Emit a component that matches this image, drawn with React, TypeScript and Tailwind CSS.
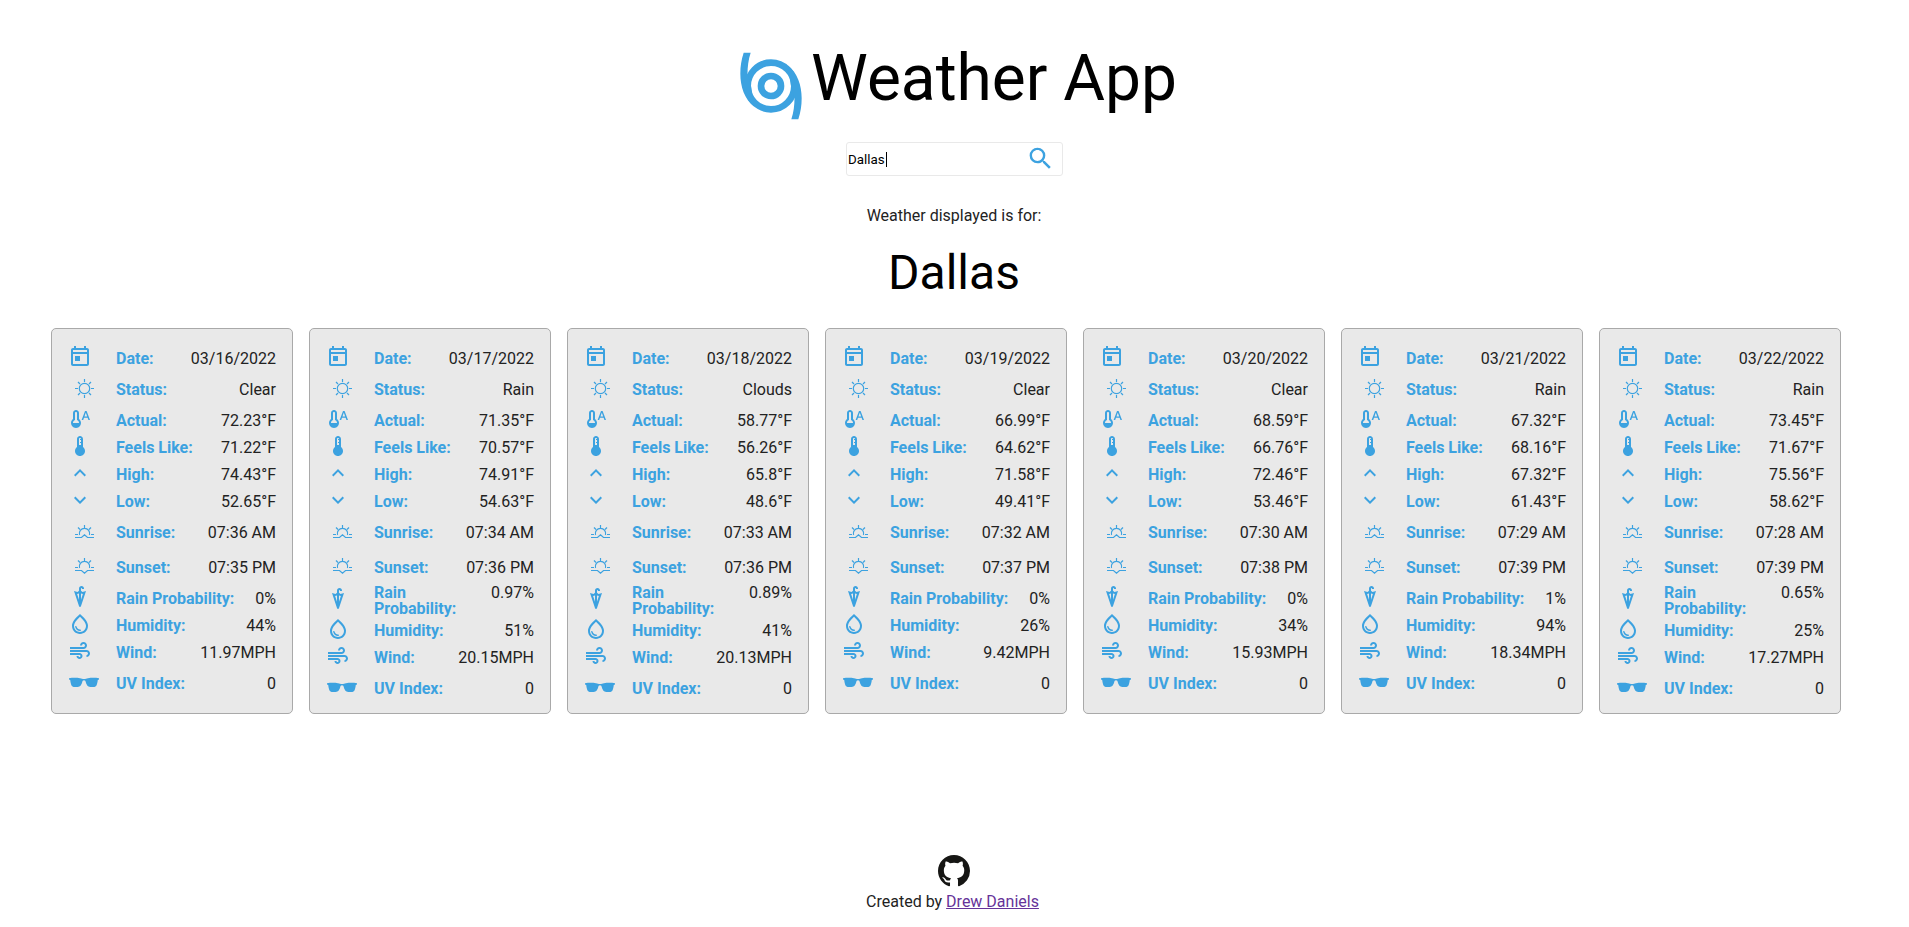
import type { ReactNode } from "react";
import {
  MdDeviceThermostat,
  MdExpandLess,
  MdExpandMore,
  MdOutlineAir,
  MdOutlineUmbrella,
  MdOutlineWaterDrop,
  MdSearch,
  MdThermostatAuto,
} from "react-icons/md";

interface Day {
  date: string;
  status: string;
  actual: string;
  feels: string;
  high: string;
  low: string;
  sunrise: string;
  sunset: string;
  rain: string;
  humidity: string;
  wind: string;
}

const days: Day[] = [
  { date: "03/16/2022", status: "Clear", actual: "72.23", feels: "71.22", high: "74.43", low: "52.65", sunrise: "07:36 AM", sunset: "07:35 PM", rain: "0", humidity: "44", wind: "11.97" },
  { date: "03/17/2022", status: "Rain", actual: "71.35", feels: "70.57", high: "74.91", low: "54.63", sunrise: "07:34 AM", sunset: "07:36 PM", rain: "0.97", humidity: "51", wind: "20.15" },
  { date: "03/18/2022", status: "Clouds", actual: "58.77", feels: "56.26", high: "65.8", low: "48.6", sunrise: "07:33 AM", sunset: "07:36 PM", rain: "0.89", humidity: "41", wind: "20.13" },
  { date: "03/19/2022", status: "Clear", actual: "66.99", feels: "64.62", high: "71.58", low: "49.41", sunrise: "07:32 AM", sunset: "07:37 PM", rain: "0", humidity: "26", wind: "9.42" },
  { date: "03/20/2022", status: "Clear", actual: "68.59", feels: "66.76", high: "72.46", low: "53.46", sunrise: "07:30 AM", sunset: "07:38 PM", rain: "0", humidity: "34", wind: "15.93" },
  { date: "03/21/2022", status: "Rain", actual: "67.32", feels: "68.16", high: "67.32", low: "61.43", sunrise: "07:29 AM", sunset: "07:39 PM", rain: "1", humidity: "94", wind: "18.34" },
  { date: "03/22/2022", status: "Rain", actual: "73.45", feels: "71.67", high: "75.56", low: "58.62", sunrise: "07:28 AM", sunset: "07:39 PM", rain: "0.65", humidity: "25", wind: "17.27" },
];

function Hurricane() {
  const arm =
    "M3.8 2H5.9C5.2 4.1 4.95 6.3 4.95 8.3L6 12L7 18.2C4 16 2.8 12 2.8 8.3C2.8 6.1 3.1 4.1 3.8 2z";
  return (
    <svg viewBox="0 0 24 24" className="mt-[14px] -ml-px size-20 shrink-0 text-[#3ca2e0]">
      <g fill="none" stroke="currentColor" strokeWidth="2">
        <circle cx="12" cy="12" r="7" />
        <circle cx="12" cy="12" r="3" />
      </g>
      <path d={arm} fill="currentColor" />
      <path d={arm} fill="currentColor" transform="rotate(180 12 12)" />
    </svg>
  );
}

function Today() {
  return (
    <svg viewBox="0 0 24 24" fill="currentColor" className="size-6">
      <path d="M19 3h-1V1h-2v2H8V1H6v2H5c-1.11 0-1.99.9-1.99 2L3 19c0 1.1.89 2 2 2h14c1.1 0 2-.9 2-2V5c0-1.1-.9-2-2-2zm0 16H5V9h14v10zm0-12H5V5h14v2zM7 11h5v5H7z" />
    </svg>
  );
}

function Sun() {
  return (
    <svg viewBox="0 0 30 30" fill="none" stroke="currentColor" strokeWidth="1.2" className="size-[30px]">
      <circle cx="15.5" cy="14.5" r="5.2" />
      <path d="M15.5 5v3M15.5 21v3M6 14.5h3M22 14.5h3M9 8l2 2M20 19l2 2M9 21l2-2M20 10l2-2" />
    </svg>
  );
}

function Sunrise() {
  return (
    <svg viewBox="0 0 30 30" fill="none" stroke="currentColor" strokeWidth="1.2" className="size-[30px]">
      <path d="M10.5 18a5.2 5.2 0 1 1 10 0M15.5 8v3M9 10.5l2 2M22 10.5l-2 2M6 17.5h3M22 17.5h3M6 20.5h6.5l3-2.7l3 2.7h6.5" />
    </svg>
  );
}

function Sunset() {
  return (
    <svg viewBox="0 0 30 30" fill="none" stroke="currentColor" strokeWidth="1.2" className="size-[30px]">
      <path d="M10.5 16a5.2 5.2 0 1 1 10 0M15.5 6v3M9 8.5l2 2M22 8.5l-2 2M6 15.5h3M22 15.5h3M6 18.5h6.5l3 2.7l3-2.7h6.5" />
    </svg>
  );
}

function Sunglasses() {
  return (
    <svg viewBox="0 0 30 30" fill="currentColor" className="size-[30px]">
      <path d="M0 10.2c4-.6 8-.5 11 0 1.500.3 2.500.7 4 .7s2.500-.4 4-.7c3-.5 7-.6 11 0v1.200l-1.200.6c-.4 2.700-.8 4.900-1.700 5.900-.8.9-2 1.100-4.600 1.100-3.300 0-4.600-1.300-5.600-4.600-.4-1.300-.7-2.200-1.900-2.200s-1.500.9-1.900 2.200c-1 3.300-2.300 4.600-5.600 4.600-2.600 0-3.800-.2-4.600-1.100-.9-1-1.300-3.200-1.700-5.900L0 11.400z" />
    </svg>
  );
}

function GitHubMark() {
  return (
    <svg viewBox="0 0 16 16" fill="currentColor" className="ml-px size-8 text-[#161614]">
      <path d="M8 0C3.58 0 0 3.58 0 8c0 3.54 2.29 6.53 5.47 7.59.4.07.55-.17.55-.38 0-.19-.01-.82-.01-1.49-2.01.37-2.53-.49-2.69-.94-.09-.23-.48-.94-.82-1.13-.28-.15-.68-.52-.01-.53.63-.01 1.08.58 1.23.82.72 1.21 1.87.87 2.33.66.07-.52.28-.87.51-1.07-1.78-.2-3.64-.89-3.64-3.95 0-.87.31-1.59.82-2.15-.08-.2-.36-1.02.08-2.12 0 0 .67-.21 2.2.82.64-.18 1.32-.27 2-.27s1.36.09 2 .27c1.53-1.04 2.2-.82 2.2-.82.44 1.1.16 1.92.08 2.12.51.56.82 1.27.82 2.15 0 3.07-1.87 3.75-3.65 3.95.29.25.54.73.54 1.48 0 1.07-.01 1.93-.01 2.2 0 .21.15.46.55.38A8.01 8.01 0 0 0 16 8c0-4.42-3.58-8-8-8z" />
    </svg>
  );
}

interface RowProps {
  icon: ReactNode;
  label: string;
  value: string;
  tall?: boolean;
}

function Row({ icon, label, value, tall }: RowProps) {
  return (
    <div className={`flex items-center ${tall ? "min-h-[35px]" : "min-h-[27px]"}`}>
      <div className={`w-12 shrink-0 text-[#3ca2e0] ${tall ? "mt-px pl-px" : "-mt-px mb-px"}`}>{icon}</div>
      <div className="mt-px -mb-px flex flex-1 justify-between">
        <span className="font-bold text-[#3ca2e0]">{label}</span>
        <span className="whitespace-nowrap pl-4">{value}</span>
      </div>
    </div>
  );
}

function Card({ day }: { day: Day }) {
  return (
    <article className="w-[242px] rounded-[5px] border border-[#a9a9a9] bg-[#e9e9e9] pt-[15px] pr-4 pb-2 pl-4 leading-4">
      <Row icon={<Today />} label="Date:" value={day.date} />
      <Row tall icon={<Sun />} label="Status:" value={day.status} />
      <Row icon={<MdThermostatAuto className="size-6" />} label="Actual:" value={`${day.actual}°F`} />
      <Row icon={<MdDeviceThermostat className="size-6" />} label="Feels Like:" value={`${day.feels}°F`} />
      <Row icon={<MdExpandLess className="size-6" />} label="High:" value={`${day.high}°F`} />
      <Row icon={<MdExpandMore className="size-6" />} label="Low:" value={`${day.low}°F`} />
      <Row tall icon={<Sunrise />} label="Sunrise:" value={day.sunrise} />
      <Row tall icon={<Sunset />} label="Sunset:" value={day.sunset} />
      <Row icon={<MdOutlineUmbrella className="size-6" />} label="Rain Probability:" value={`${day.rain}%`} />
      <Row icon={<MdOutlineWaterDrop className="size-6" />} label="Humidity:" value={`${day.humidity}%`} />
      <Row icon={<MdOutlineAir className="size-6" />} label="Wind:" value={`${day.wind}MPH`} />
      <Row tall icon={<Sunglasses />} label="UV Index:" value="0" />
    </article>
  );
}

export default function App() {
  return (
    <div className="flex h-[927px] flex-col items-center bg-white font-['Roboto',sans-serif] text-base text-[#222222]">
      <header className="mt-10 flex h-[78px] items-center text-black">
        <Hurricane />
        <h1 className="text-[64px] leading-[78px]">Weather App</h1>
      </header>

      <div className="mt-6 flex h-[34px] w-[217px] items-center justify-between rounded-[3px] border border-[#e9e9e9] pr-[7px] pl-px text-black">
        <div className="mt-0.5 flex items-center">
          <span className="text-[13.333px]">Dallas</span>
          <span className="ml-px h-[15px] w-px bg-black" />
        </div>
        <MdSearch className="-mt-px size-[29px] text-[#3ca2e0]" />
      </div>

      <p className="mt-7 mr-px leading-6">Weather displayed is for:</p>
      <h2 className="mt-[17px] mr-px text-5xl leading-[56px] text-black">Dallas</h2>

      <main className="mt-[27px] mr-[17px] flex gap-4">
        {days.map((day) => (
          <Card key={day.date} day={day} />
        ))}
      </main>

      <footer className="mt-auto mr-[3px] mb-[13px] flex flex-col items-center">
        <GitHubMark />
        <p className="mt-[3px] mr-px leading-6">
          Created by{" "}
          <a href="#" className="text-[#663399] underline">
            Drew Daniels
          </a>
        </p>
      </footer>
    </div>
  );
}
